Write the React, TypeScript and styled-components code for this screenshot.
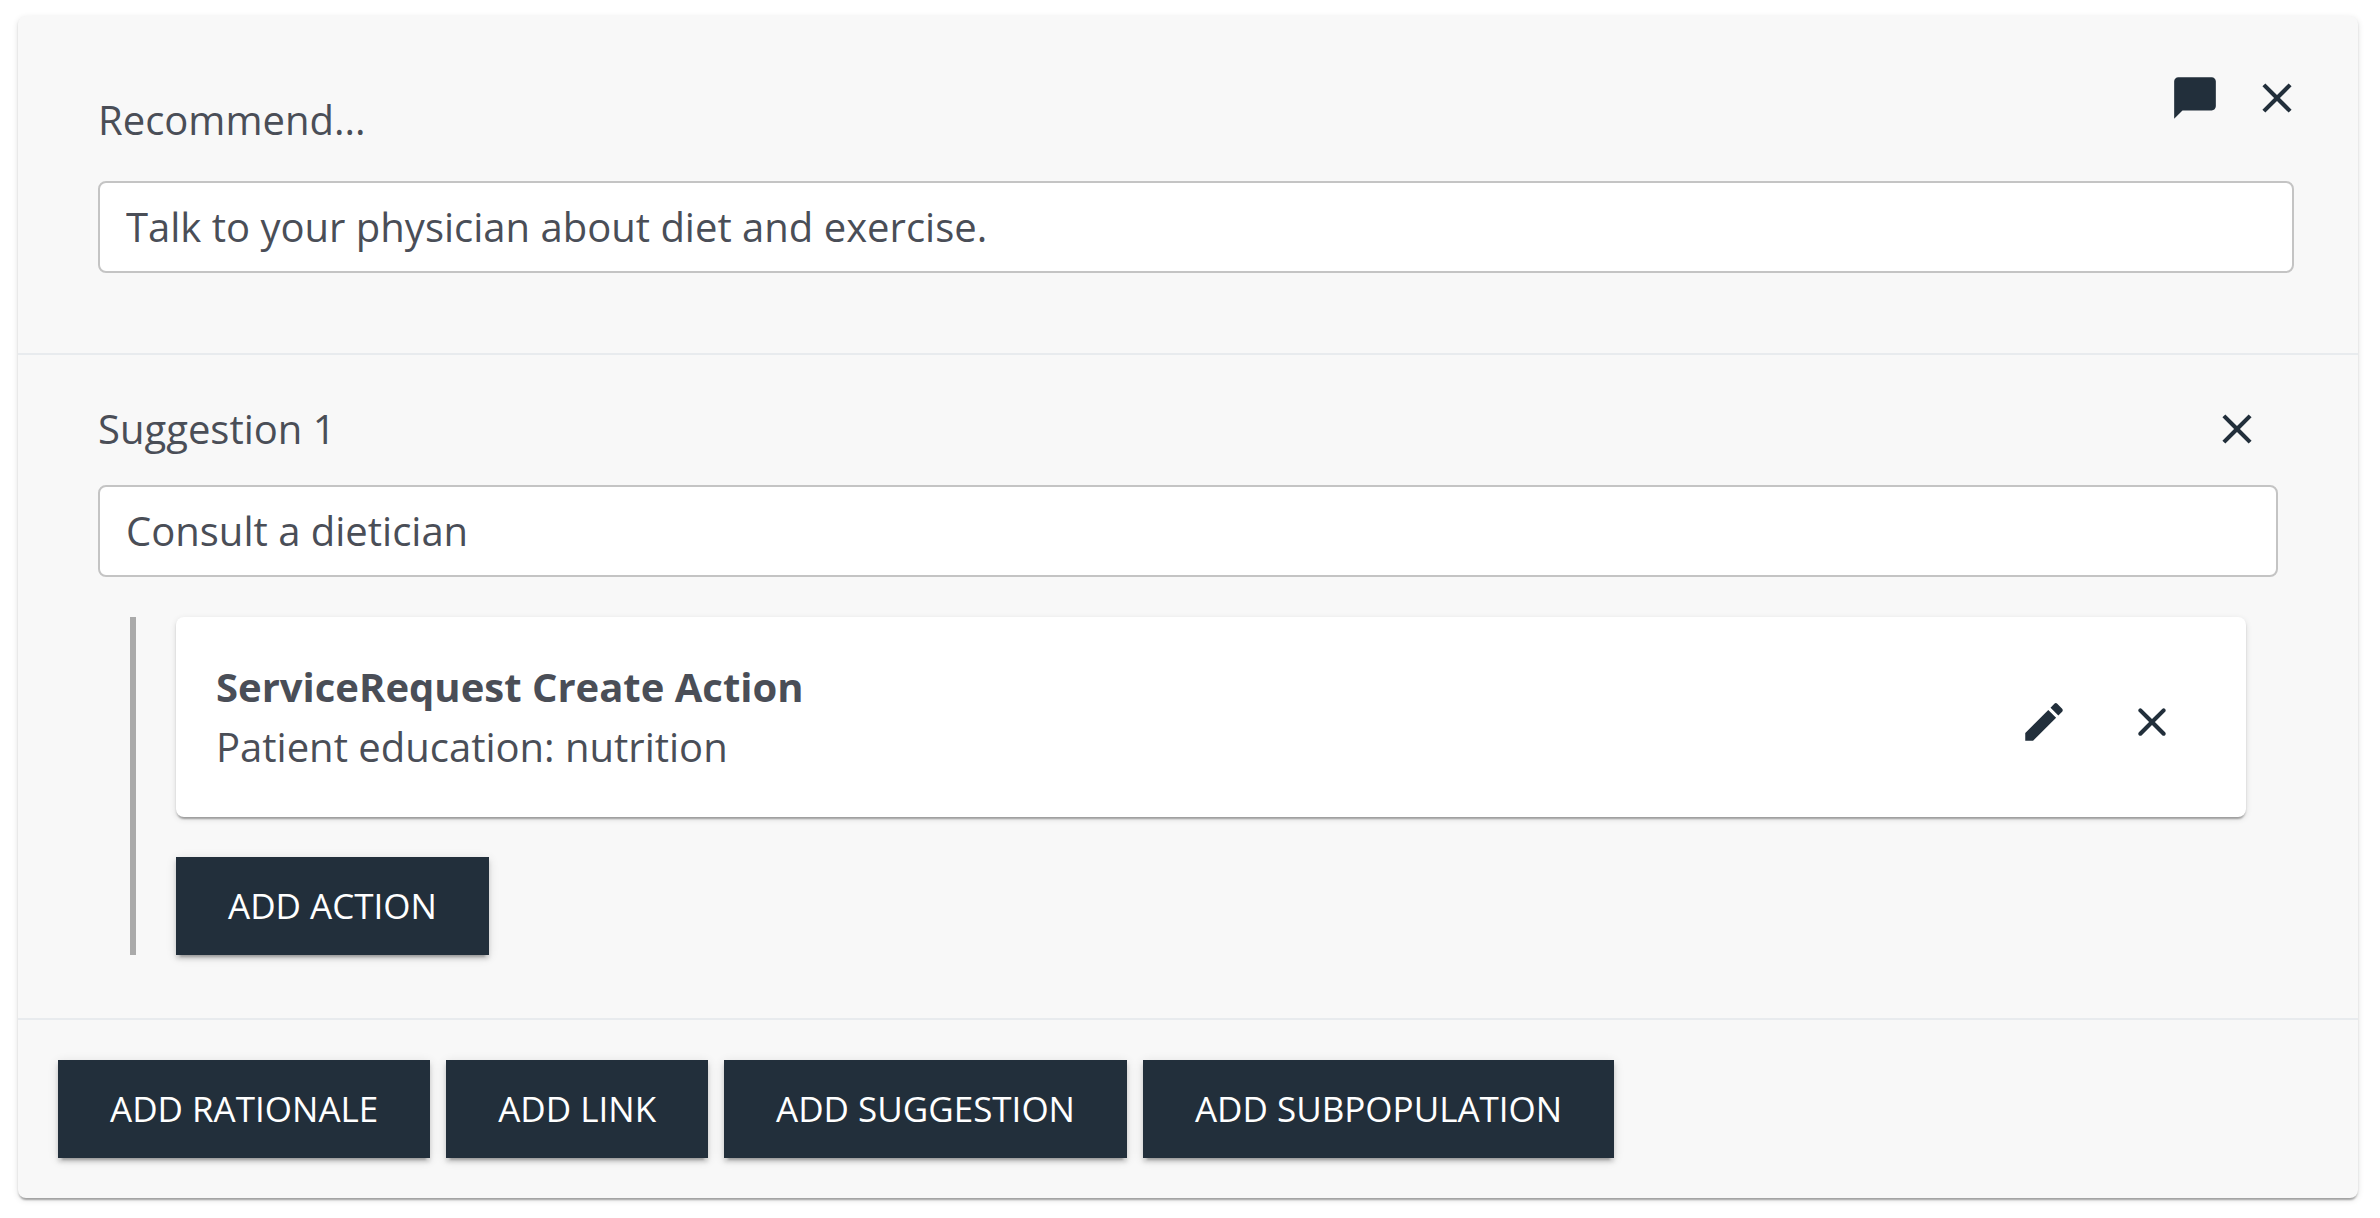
import React, { useState } from "react";
import styled, { createGlobalStyle } from "styled-components";

const GlobalStyle = createGlobalStyle`
  *, *::before, *::after {
    box-sizing: border-box;
  }

  body {
    margin: 0;
    background: #ffffff;
    color: #4a4e57;
    font-family: "Open Sans", "Noto Sans", sans-serif;
    font-size: 40px;
    line-height: 60px;
  }
`;

const Page = styled.main`
  padding: 16px 22px 20px 18px;
`;

const paperShadow =
  "0 4px 2px -2px rgba(0, 0, 0, 0.2), 0 2px 2px 0 rgba(0, 0, 0, 0.14), 0 2px 6px 0 rgba(0, 0, 0, 0.12)";

const Panel = styled.article`
  background: #f8f8f8;
  border-radius: 8px;
  box-shadow: ${paperShadow};
`;

const RecommendSection = styled.section`
  padding: 56px 64px 80px 80px;
  border-bottom: 2px solid #e8ebee;
`;

const SuggestionSection = styled.section`
  padding: 44px 80px 63px;
  border-bottom: 2px solid #e8ebee;
`;

const RecommendHeader = styled.header`
  display: flex;
  align-items: flex-end;
  justify-content: space-between;
  min-height: 78px;
  margin-bottom: 31px;
`;

const SuggestionHeader = styled.header`
  display: flex;
  align-items: center;
  justify-content: space-between;
  margin-bottom: 26px;
  padding-right: 15px;
`;

const FieldLabel = styled.label`
  display: block;
`;

const HeaderActions = styled.div`
  display: flex;
  align-self: flex-start;
  gap: 30px;
  margin-right: -9px;
`;

const TextInput = styled.input`
  display: block;
  width: 100%;
  height: 92px;
  padding: 0 26px 2px;
  border: 2px solid #c4c4c4;
  border-radius: 8px;
  background: #ffffff;
  color: inherit;
  font: inherit;
  outline: none;
`;

const IconButton = styled.button`
  display: flex;
  align-items: center;
  justify-content: center;
  flex: none;
  width: 52px;
  height: 52px;
  padding: 0;
  border: 0;
  background: transparent;
  color: #222f3b;
  cursor: pointer;
`;

const Icon = styled.svg`
  display: block;
  width: 50px;
  height: 50px;
  fill: currentColor;
`;

const ActionList = styled.div`
  display: flex;
  flex-direction: column;
  align-items: flex-start;
  gap: 40px;
  margin: 40px 32px 0;
  padding-left: 40px;
  border-left: 6px solid #aaaaaa;
`;

const ActionCard = styled.div`
  display: flex;
  align-items: center;
  justify-content: space-between;
  width: 100%;
  padding: 40px 68px 40px 40px;
  border-radius: 8px;
  background: #ffffff;
  box-shadow: ${paperShadow};
`;

const ActionTitle = styled.div`
  font-weight: 700;
`;

const CardActions = styled.div`
  display: flex;
  gap: 56px;
  padding-top: 10px;
`;

const Button = styled.button`
  height: 98px;
  padding: 0 52px;
  border: 0;
  background: #222f3b;
  box-shadow:
    0 6px 2px -4px rgba(0, 0, 0, 0.2),
    0 4px 4px 0 rgba(0, 0, 0, 0.14),
    0 2px 10px 0 rgba(0, 0, 0, 0.12);
  color: #ffffff;
  font: inherit;
  font-size: 35px;
  font-weight: 500;
  text-transform: uppercase;
  white-space: nowrap;
  cursor: pointer;
`;

const Footer = styled.footer`
  display: flex;
  flex-wrap: wrap;
  gap: 16px;
  padding: 40px;
`;

const CloseIcon = () => (
  <Icon viewBox="0 0 24 24" aria-hidden="true">
    <path d="M19 6.41 17.59 5 12 10.59 6.41 5 5 6.41 10.59 12 5 17.59 6.41 19 12 13.41 17.59 19 19 17.59 13.41 12z" />
  </Icon>
);

const CloseRoundedIcon = () => (
  <Icon viewBox="0 0 24 24" aria-hidden="true">
    <path d="M18.3 5.71a.9959.9959 0 0 0-1.41 0L12 10.59 7.11 5.7a.9959.9959 0 0 0-1.41 0c-.39.39-.39 1.02 0 1.41L10.59 12 5.7 16.89c-.39.39-.39 1.02 0 1.41.39.39 1.02.39 1.41 0L12 13.41l4.89 4.89c.39.39 1.02.39 1.41 0 .39-.39.39-1.02 0-1.41L13.41 12l4.89-4.89c.38-.38.38-1.02 0-1.4z" />
  </Icon>
);

const CommentIcon = () => (
  <Icon viewBox="0 0 24 24" aria-hidden="true">
    <path d="M20 2H4c-1.1 0-2 .9-2 2v18l4-4h14c1.1 0 2-.9 2-2V4c0-1.1-.9-2-2-2z" />
  </Icon>
);

const EditIcon = () => (
  <Icon viewBox="0 0 24 24" aria-hidden="true">
    <path d="M3 17.25V21h3.75L17.81 9.94l-3.75-3.75L3 17.25zM20.71 7.04c.39-.39.39-1.02 0-1.41l-2.34-2.34a.9959.9959 0 0 0-1.41 0l-1.83 1.83 3.75 3.75 1.83-1.83z" />
  </Icon>
);

const footerButtons = ["Add rationale", "Add link", "Add suggestion", "Add subpopulation"];

export default function App() {
  const [recommendation, setRecommendation] = useState(
    "Talk to your physician about diet and exercise."
  );
  const [suggestion, setSuggestion] = useState("Consult a dietician");

  return (
    <>
      <GlobalStyle />
      <Page>
        <Panel>
          <RecommendSection>
            <RecommendHeader>
              <FieldLabel htmlFor="recommendation">Recommend...</FieldLabel>
              <HeaderActions>
                <IconButton type="button" aria-label="Comment">
                  <CommentIcon />
                </IconButton>
                <IconButton type="button" aria-label="Delete recommendation">
                  <CloseIcon />
                </IconButton>
              </HeaderActions>
            </RecommendHeader>
            <TextInput
              id="recommendation"
              type="text"
              value={recommendation}
              onChange={(event) => setRecommendation(event.target.value)}
            />
          </RecommendSection>

          <SuggestionSection>
            <SuggestionHeader>
              <FieldLabel htmlFor="suggestion-1">Suggestion 1</FieldLabel>
              <IconButton type="button" aria-label="Delete suggestion">
                <CloseIcon />
              </IconButton>
            </SuggestionHeader>
            <TextInput
              id="suggestion-1"
              type="text"
              value={suggestion}
              onChange={(event) => setSuggestion(event.target.value)}
            />
            <ActionList>
              <ActionCard>
                <div>
                  <ActionTitle>ServiceRequest Create Action</ActionTitle>
                  <div>Patient education: nutrition</div>
                </div>
                <CardActions>
                  <IconButton type="button" aria-label="Edit action">
                    <EditIcon />
                  </IconButton>
                  <IconButton type="button" aria-label="Delete action">
                    <CloseRoundedIcon />
                  </IconButton>
                </CardActions>
              </ActionCard>
              <Button type="button">Add action</Button>
            </ActionList>
          </SuggestionSection>

          <Footer>
            {footerButtons.map((label) => (
              <Button key={label} type="button">
                {label}
              </Button>
            ))}
          </Footer>
        </Panel>
      </Page>
    </>
  );
}
